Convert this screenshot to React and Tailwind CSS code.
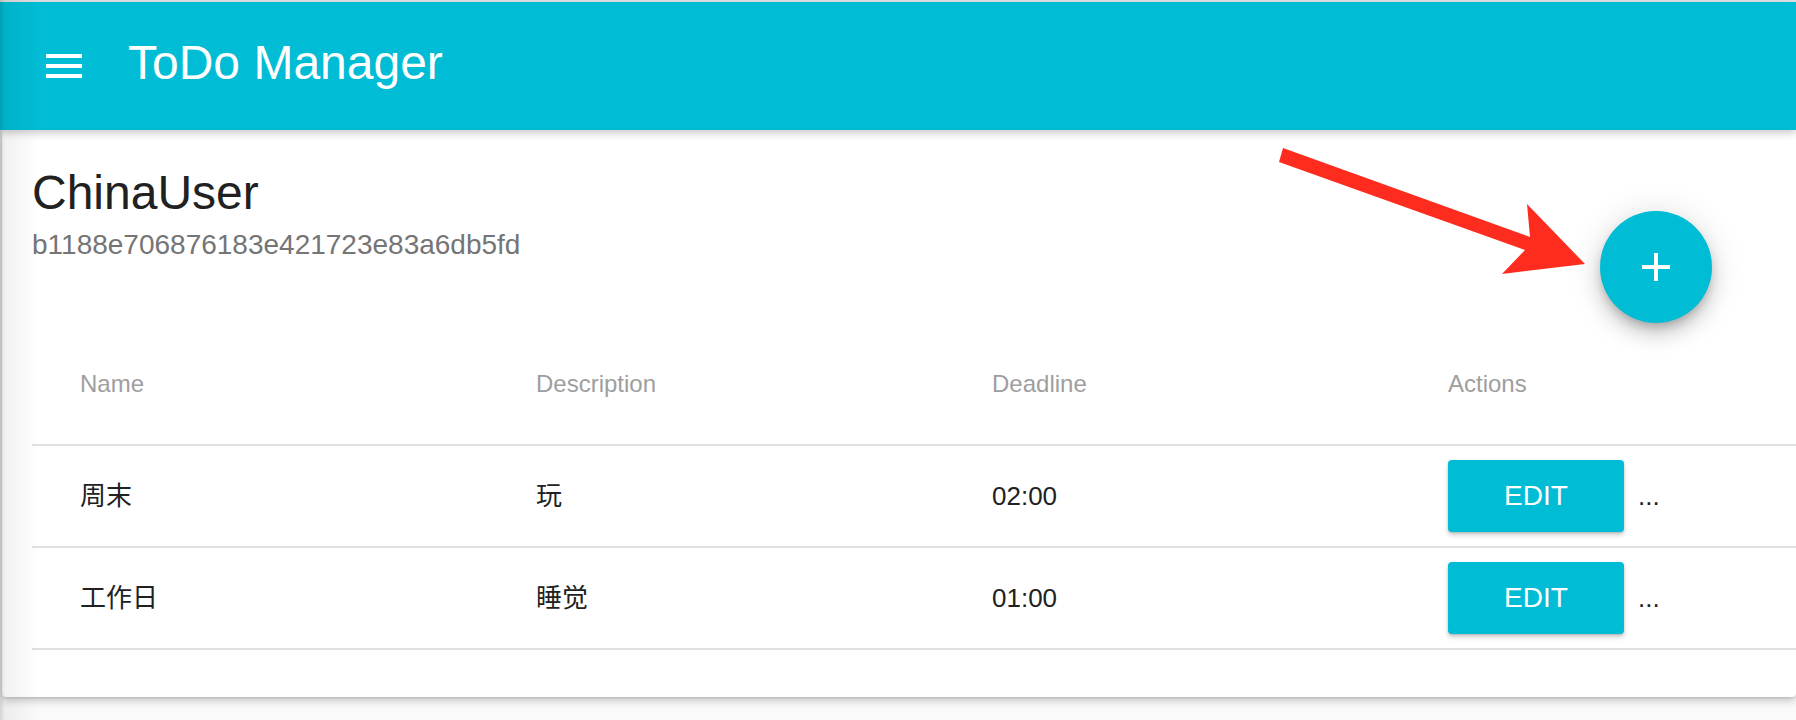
import React from "react";

const rows = [
  { name: "周末", desc: "玩", deadline: "02:00" },
  { name: "工作日", desc: "睡觉", deadline: "01:00" },
];

export default function App() {
  return (
    <div className="relative w-[1796px] h-[720px] overflow-hidden bg-[#fafafa] font-['Liberation_Sans','Noto_Sans_CJK_SC',sans-serif]">
      <div className="h-[2px] bg-[#e4e4e4]" />
      <header className="relative z-10 h-[128px] bg-[#00bcd4] flex items-center pl-[46px] shadow-[0_3px_8px_rgba(0,0,0,0.22)]">
        <svg width="36" height="24" viewBox="0 0 36 24" className="block">
          <rect x="0" y="0" width="36" height="4" fill="#fff" />
          <rect x="0" y="10" width="36" height="4" fill="#fff" />
          <rect x="0" y="20" width="36" height="4" fill="#fff" />
        </svg>
        <h1 className="ml-[46px] mb-[7px] text-[48px] leading-[1.15] text-white font-normal">ToDo Manager</h1>
      </header>

      <main className="relative ml-[2px] h-[567px] rounded-b-[4px] bg-white shadow-[0_4px_8px_rgba(0,0,0,0.2),0_1px_3px_rgba(0,0,0,0.12)]">
        <div className="pl-[30px] pt-[34px]">
          <h2 className="text-[48px] leading-[1.2] text-[#212121] font-normal">ChinaUser</h2>
          <p className="mt-[6px] text-[28px] leading-[1.2] text-[#757575]">b1188e706876183e421723e83a6db5fd</p>
        </div>

        <div className="ml-[30px] mt-[63px] w-[1824px]">
          <div className="flex h-[122px] items-center border-b-2 border-[#e0e0e0] text-[24px] text-[#9e9e9e]">
            <div className="w-[456px] pl-[48px]">Name</div>
            <div className="w-[456px] pl-[48px]">Description</div>
            <div className="w-[456px] pl-[48px]">Deadline</div>
            <div className="w-[456px] pl-[48px]">Actions</div>
          </div>
          {rows.map((r) => (
            <div key={r.name} className="flex h-[102px] items-center border-b-2 border-[#e0e0e0] text-[26px] text-[#212121]">
              <div className="w-[456px] pl-[48px]">{r.name}</div>
              <div className="w-[456px] pl-[48px]">{r.desc}</div>
              <div className="w-[456px] pl-[48px]">{r.deadline}</div>
              <div className="w-[456px] pl-[48px] flex items-center">
                <button className="w-[176px] h-[72px] rounded-[4px] bg-[#00bcd4] text-white text-[28px] shadow-[0_3px_5px_rgba(0,0,0,0.2),0_1px_2px_rgba(0,0,0,0.14)]">
                  EDIT
                </button>
                <span className="ml-[14px] text-[26px] text-[#212121]">...</span>
              </div>
            </div>
          ))}
        </div>

        <button className="absolute left-[1598px] top-[81px] w-[112px] h-[112px] rounded-full bg-[#00bcd4] flex items-center justify-center shadow-[0_6px_10px_-2px_rgba(0,0,0,0.2),0_12px_20px_0_rgba(0,0,0,0.14),0_2px_36px_0_rgba(0,0,0,0.12)]">
          <svg width="28" height="28" viewBox="0 0 28 28">
            <rect x="12" y="0" width="4" height="28" fill="#fff" />
            <rect x="0" y="12" width="28" height="4" fill="#fff" />
          </svg>
        </button>
      </main>

      <div className="pointer-events-none absolute left-0 top-0 h-full w-[40px] bg-gradient-to-r from-black/[0.06] to-transparent z-20" />
      <div className="pointer-events-none absolute left-0 top-0 h-full w-[5px] bg-gradient-to-r from-black/10 to-transparent z-20" />

      <svg className="pointer-events-none absolute left-0 top-0 z-30" width="1796" height="720">
        <polygon
          points="1283,148 1530,237 1527,204 1585,264 1502,274 1525,250 1279,162"
          fill="#fe2c1e"
        />
      </svg>
    </div>
  );
}
